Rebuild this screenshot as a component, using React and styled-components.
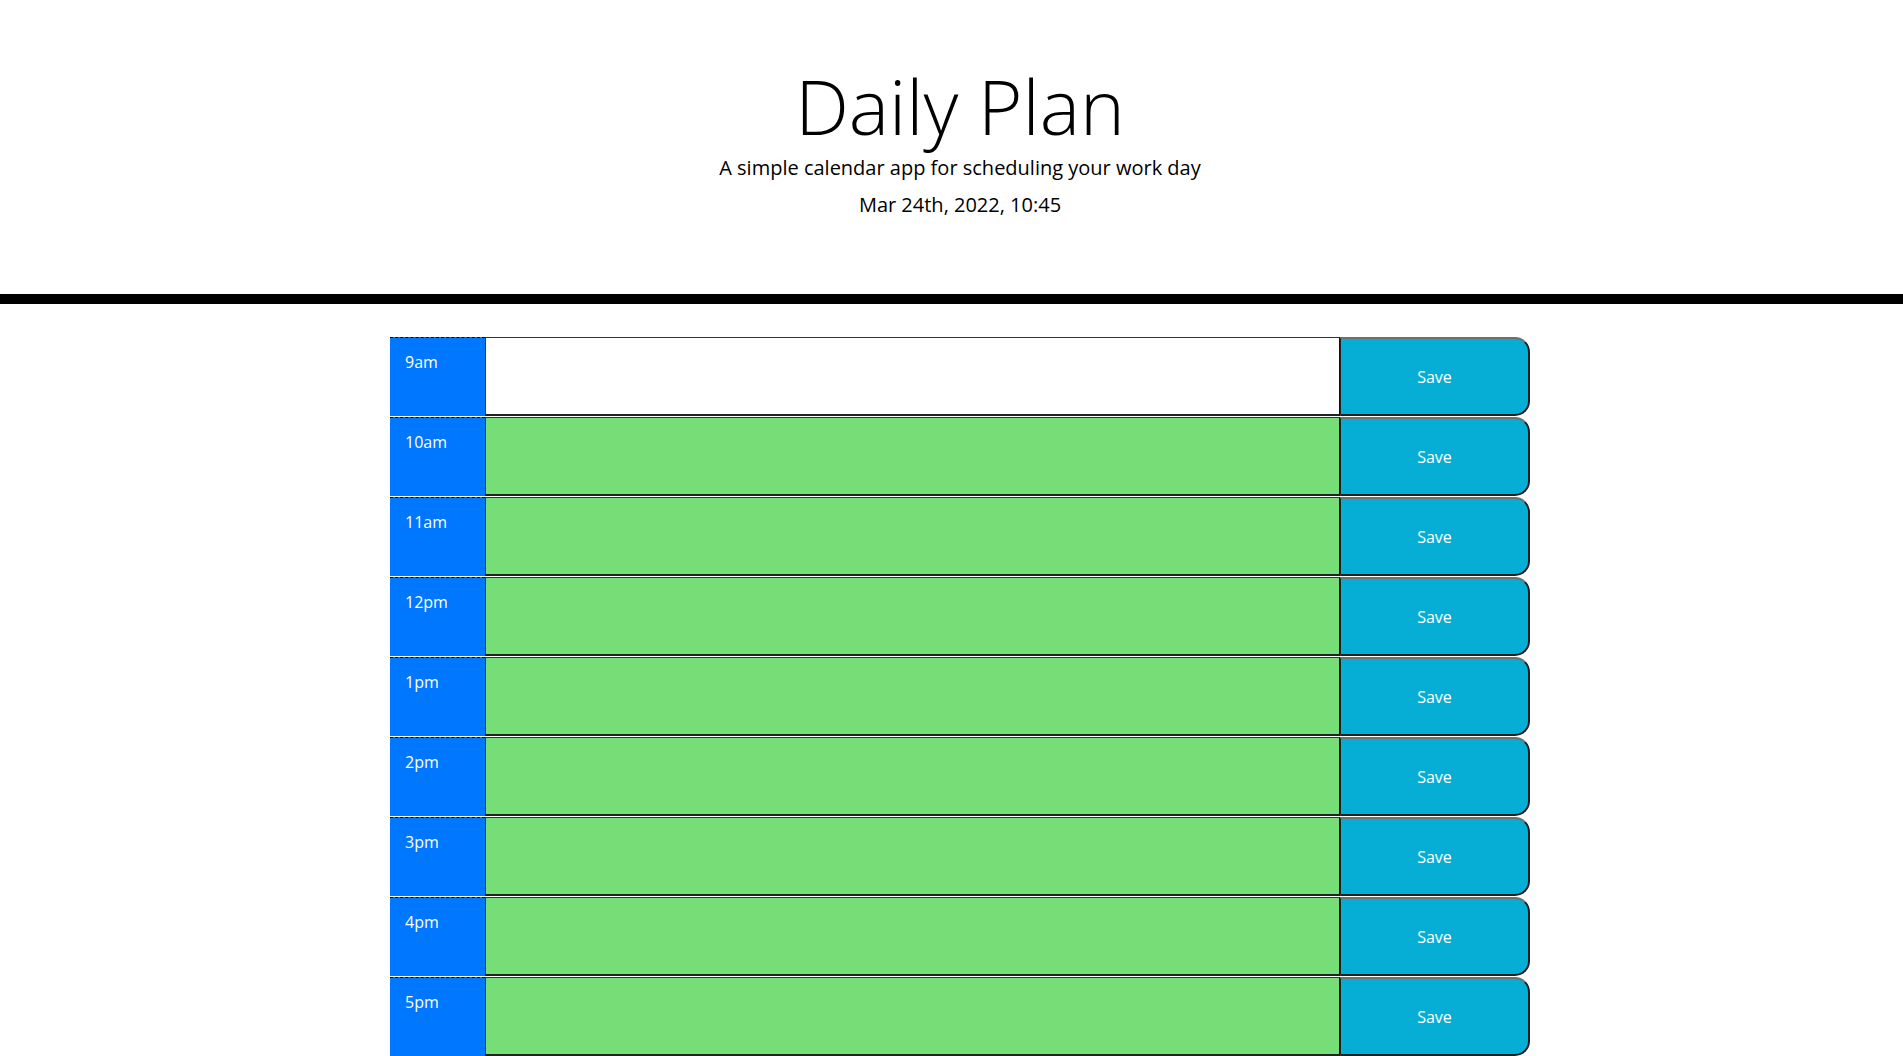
import React from "react";
import styled, { createGlobalStyle } from "styled-components";

const GlobalStyle = createGlobalStyle`
  *, *::before, *::after {
    box-sizing: border-box;
  }

  body {
    margin: 0;
    font-family: "Open Sans", "Liberation Sans", sans-serif;
    font-size: 16px;
    line-height: 1;
    color: #212529;
    background: #ffffff;
  }
`;

// Header
const Jumbotron = styled.header`
  text-align: center;
  padding: 68px 0 79px 17px;
  border-bottom: 10px solid #000000;
  margin-bottom: 32px;
`;

const Title = styled.h1`
  margin: 0 0 14px;
  font-size: 76px;
  font-weight: 300;
  line-height: 1;
  color: #000000;
`;

const Lead = styled.p`
  margin: 0;
  font-size: 20px;
  font-weight: 400;
  line-height: 1;
  color: #000000;

  & + & {
    margin-top: 17px;
  }
`;

// Schedule
const Main = styled.main`
  padding-left: 17px;
`;

const Schedule = styled.div`
  width: 1140px;
  margin: 0 auto;
`;

const Row = styled.div`
  display: grid;
  grid-template-columns: 95px 855px 190px;
  height: 80px;
  border-top: 1px solid #ffffff;
`;

const Hour = styled.div`
  background-color: #0077ff;
  color: #ffffff;
  border-top: 1px dashed #000000;
  padding: 16px 0 0 15px;
  font-size: 16px;
`;

const Description = styled.textarea`
  display: block;
  width: 100%;
  height: 100%;
  margin: 0;
  padding: 10px;
  resize: none;
  font-family: inherit;
  font-size: 16px;
  color: #000000;
  background-color: ${(p) => (p.$status === "present" ? "#ffffff" : "#77dd77")};
  border: 1px solid #333333;
  border-bottom: 2px solid #222222;
  border-right: 1px solid #111111;
  outline: none;
`;

const SaveButton = styled.button`
  margin: 0;
  padding: 0;
  font-family: inherit;
  font-size: 16px;
  color: #ffffff;
  background-color: #06aed5;
  border: 2px solid #1e1e1e;
  border-top-color: #6f6f6f;
  border-left: 1px solid #222222;
  border-radius: 0 15px 15px 0;
  cursor: pointer;
`;

const hours = ["9am", "10am", "11am", "12pm", "1pm", "2pm", "3pm", "4pm", "5pm"];

const App = () => {
  return (
    <>
      <GlobalStyle />
      <Jumbotron>
        <Title>Daily Plan</Title>
        <Lead>A simple calendar app for scheduling your work day</Lead>
        <Lead>Mar 24th, 2022, 10:45</Lead>
      </Jumbotron>
      <Main>
        <Schedule>
          {hours.map((hour, i) => (
            <Row key={hour}>
              <Hour>{hour}</Hour>
              <Description $status={i === 0 ? "present" : "future"} />
              <SaveButton>Save</SaveButton>
            </Row>
          ))}
        </Schedule>
      </Main>
    </>
  );
};

export default App;
